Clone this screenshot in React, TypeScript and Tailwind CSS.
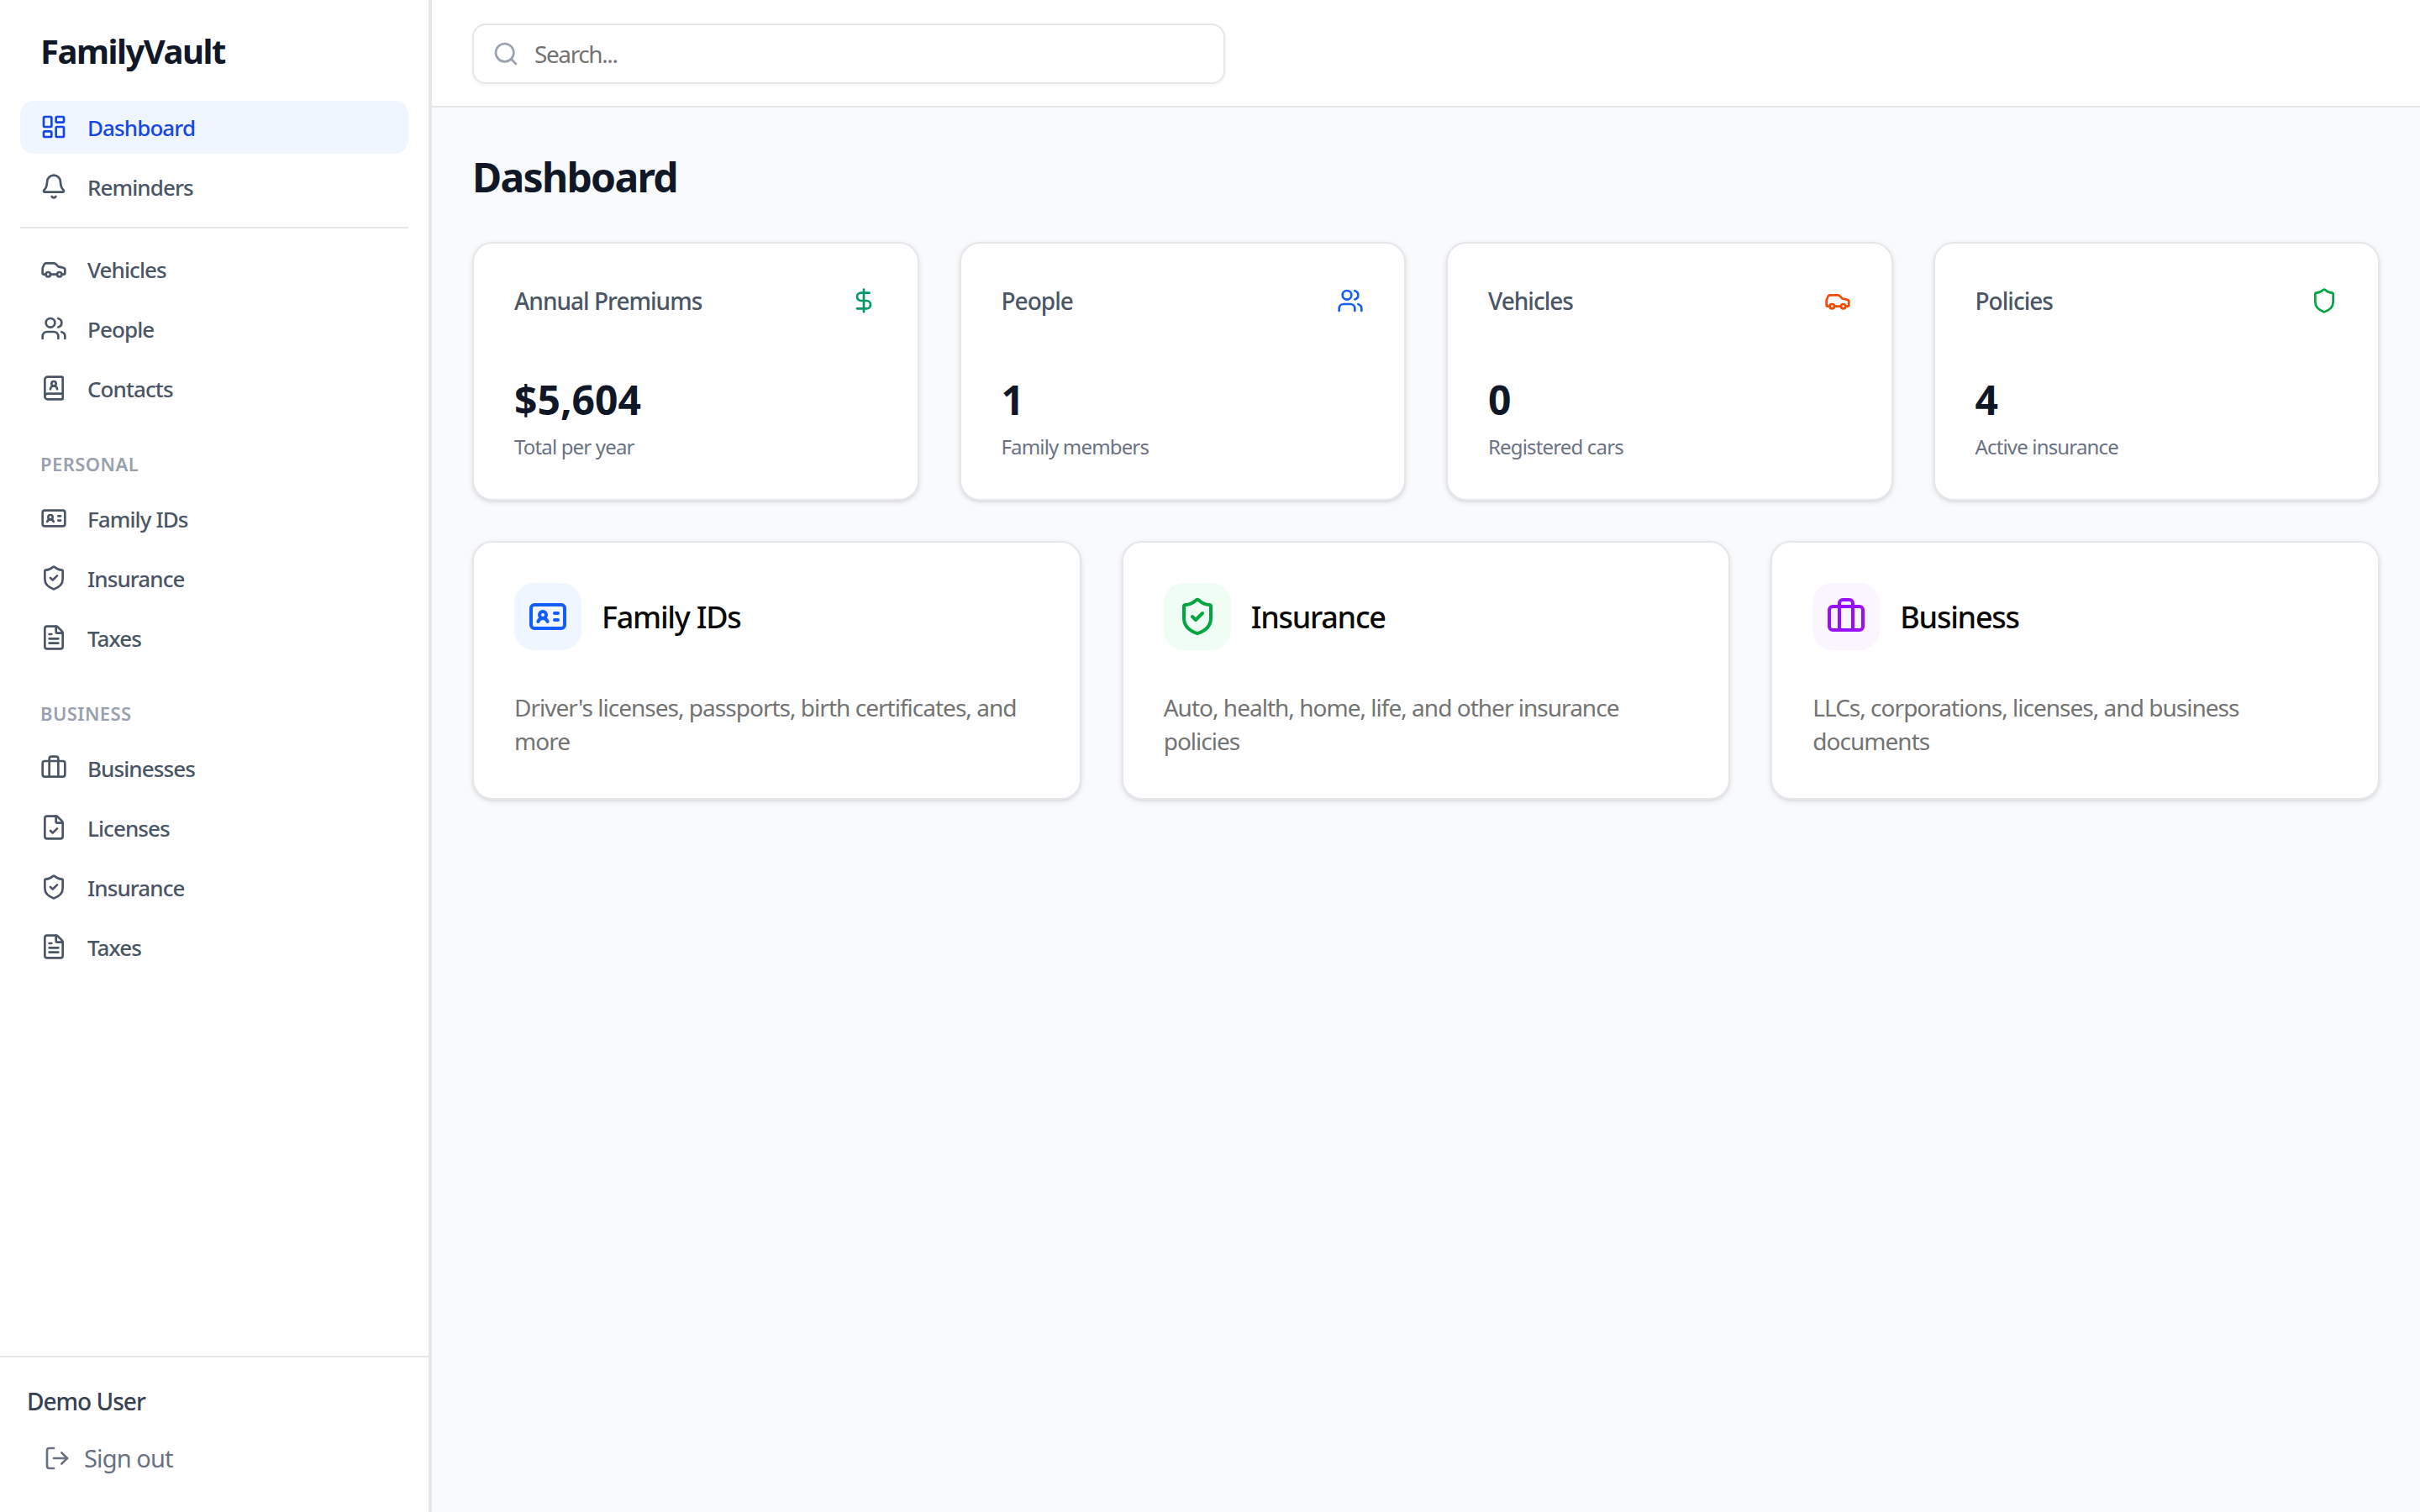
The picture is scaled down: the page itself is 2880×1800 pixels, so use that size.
import {
  Bell,
  BookUser,
  Briefcase,
  Car,
  DollarSign,
  FileCheck,
  FileText,
  IdCard,
  LayoutDashboard,
  LogOut,
  Search,
  Shield,
  ShieldCheck,
  Users,
} from "lucide-react";

const topLinks = [
  { label: "Dashboard", icon: LayoutDashboard, active: true },
  { label: "Reminders", icon: Bell },
];

const mainLinks = [
  { label: "Vehicles", icon: Car },
  { label: "People", icon: Users },
  { label: "Contacts", icon: BookUser },
];

const personalLinks = [
  { label: "Family IDs", icon: IdCard },
  { label: "Insurance", icon: ShieldCheck },
  { label: "Taxes", icon: FileText },
];

const businessLinks = [
  { label: "Businesses", icon: Briefcase },
  { label: "Licenses", icon: FileCheck },
  { label: "Insurance", icon: ShieldCheck },
  { label: "Taxes", icon: FileText },
];

const stats = [
  { title: "Annual Premiums", value: "$5,604", note: "Total per year", icon: DollarSign, color: "text-emerald-600" },
  { title: "People", value: "1", note: "Family members", icon: Users, color: "text-blue-600" },
  { title: "Vehicles", value: "0", note: "Registered cars", icon: Car, color: "text-orange-600" },
  { title: "Policies", value: "4", note: "Active insurance", icon: Shield, color: "text-green-600" },
];

const features = [
  {
    title: "Family IDs",
    text: "Driver's licenses, passports, birth certificates, and more",
    icon: IdCard,
    box: "bg-blue-50 text-blue-600",
  },
  {
    title: "Insurance",
    text: "Auto, health, home, life, and other insurance policies",
    icon: ShieldCheck,
    box: "bg-green-50 text-green-600",
  },
  {
    title: "Business",
    text: "LLCs, corporations, licenses, and business documents",
    icon: Briefcase,
    box: "bg-purple-50 text-purple-600",
  },
];

type NavLink = { label: string; icon: typeof Bell; active?: boolean };

function NavList({ links }: { links: NavLink[] }) {
  return (
    <div className="flex flex-col gap-2">
      {links.map((link) => (
        <a
          key={link.label}
          className={`flex h-[63.3px] items-center gap-6 rounded-2xl px-6 text-[26px] font-medium tracking-[-0.035em] ${
            link.active ? "bg-blue-50 text-blue-700" : "text-gray-600"
          }`}
        >
          <link.icon size={32} className="mb-[1px] shrink-0" />
          <span className="mt-[2px]">{link.label}</span>
        </a>
      ))}
    </div>
  );
}

function SectionLabel({ children }: { children: string }) {
  return (
    <p className="px-6 pb-[17px] text-[22px] leading-8 font-semibold tracking-[0.02em] text-gray-400 uppercase">
      {children}
    </p>
  );
}

export default function App() {
  return (
    <div className="flex h-screen bg-gray-50 font-['Noto_Sans',sans-serif]">
      {/* Sidebar */}
      <aside className="flex w-[514px] shrink-0 flex-col border-r-4 border-gray-200 bg-white">
        <div className="px-12 pt-[33px] pb-[31px]">
          <h1 className="text-[40px] leading-14 font-bold tracking-[-0.037em] text-gray-900">FamilyVault</h1>
        </div>
        <nav className="flex flex-1 flex-col px-6">
          <NavList links={topLinks} />
          <div className="mt-[15px] mb-[17px] border-t-2 border-gray-200" />
          <NavList links={mainLinks} />
          <div className="mt-[42px]">
            <SectionLabel>Personal</SectionLabel>
            <NavList links={personalLinks} />
          </div>
          <div className="mt-[42px]">
            <SectionLabel>Business</SectionLabel>
            <NavList links={businessLinks} />
          </div>
        </nav>
        <div className="border-t-2 border-gray-200 px-8 pt-[32px] pb-[44px]">
          <p className="text-[28px] leading-10 font-medium tracking-[-0.035em] text-gray-700">Demo User</p>
          <button className="mt-7 flex items-center gap-4 pl-5 text-[29px] leading-10 tracking-[-0.03em] text-gray-500">
            <LogOut size={32} />
            Sign out
          </button>
        </div>
      </aside>

      <div className="flex min-w-0 flex-1 flex-col">
        {/* Top bar */}
        <header className="flex h-32 shrink-0 items-center border-b-2 border-gray-200 bg-white px-12 pt-0.5">
          <div className="relative w-[896px]">
            <Search size={32} className="absolute top-5 left-6 text-gray-400" />
            <input
              placeholder="Search..."
              className="h-[72px] w-full rounded-2xl border-2 border-gray-200 bg-white pr-6 pl-[72px] text-[28px] tracking-[-0.05em] shadow-[0_2px_4px_0_rgb(0_0_0/0.05)] placeholder:text-[#737373]"
            />
          </div>
        </header>

        <main className="flex-1 p-12">
          <h2 className="h-16 text-[48px] leading-[70px] font-bold tracking-[-0.035em] text-gray-900">Dashboard</h2>

          <div className="mt-12 grid grid-cols-4 gap-12">
            {stats.map((stat) => (
              <div
                key={stat.title}
                className="rounded-3xl border-2 border-gray-200 bg-white p-12 pb-[46px] shadow-[0_2px_6px_0_rgb(0_0_0/0.1),0_2px_4px_-2px_rgb(0_0_0/0.1)]"
              >
                <div className="flex items-center justify-between pb-[18px]">
                  <span className="text-[28px] leading-10 font-medium tracking-[-0.035em] text-gray-600">{stat.title}</span>
                  <stat.icon size={32} className={stat.color} />
                </div>
                <p className="mt-12 text-[48px] leading-16 font-bold text-gray-900">{stat.value}</p>
                <p className="mt-2 text-[24px] leading-8 tracking-[-0.035em] text-gray-500">{stat.note}</p>
              </div>
            ))}
          </div>

          <div className="mt-12 grid grid-cols-3 gap-12">
            {features.map((item) => (
              <div
                key={item.title}
                className="rounded-3xl border-2 border-gray-200 bg-white p-12 shadow-[0_2px_6px_0_rgb(0_0_0/0.1),0_2px_4px_-2px_rgb(0_0_0/0.1)]"
              >
                <div className="flex items-center gap-6">
                  <div className={`flex size-20 items-center justify-center rounded-3xl ${item.box}`}>
                    <item.icon size={48} />
                  </div>
                  <h3 className="h-14 text-[36px] leading-[58px] font-medium tracking-[-0.035em] text-[#0a0a0a]">{item.title}</h3>
                </div>
                <p className="mt-12 text-[28px] leading-10 tracking-[-0.035em] text-[#737373]">{item.text}</p>
              </div>
            ))}
          </div>
        </main>
      </div>
    </div>
  );
}
